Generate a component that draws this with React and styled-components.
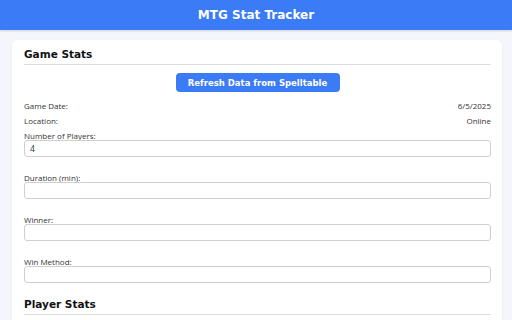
import React from "react";
import styled, { createGlobalStyle } from "styled-components";

const GlobalStyle = createGlobalStyle`
  html, body {
    margin: 0;
    padding: 0;
    background: #f4f6fb;
    font-family: "Open Sans", "Liberation Sans", sans-serif;
    color: #333;
  }
  * { box-sizing: border-box; }
`;

const boldFont = `"DejaVu Sans", "Liberation Sans", sans-serif`;

const Header = styled.header`
  height: 30px;
  background: #3b7bf6;
  color: #fff;
  display: flex;
  align-items: center;
  justify-content: center;
  font-family: ${boldFont};
  font-size: 12px;
  font-weight: 700;
  box-shadow: 0 1px 2px rgba(0, 0, 0, 0.15);
`;

const Main = styled.main`
  padding: 10px 10px 0 12px;
`;

const Card = styled.div`
  background: #fff;
  border-radius: 6px;
  padding: 7px 11px 12px 12px;
  box-shadow: 0 1px 3px rgba(0, 0, 0, 0.05);
  display: flex;
  flex-direction: column;
`;

const Section = styled.section`
  display: flex;
  flex-direction: column;
  & + & {
    margin-top: 14px;
  }
`;

const Heading = styled.h2`
  margin: 0;
  font-family: ${boldFont};
  font-size: 10.5px;
  line-height: 15px;
  font-weight: 700;
  color: #111;
  padding-bottom: 2px;
  border-bottom: 1px solid #dcdcdc;
`;

const ButtonRow = styled.div`
  display: flex;
  justify-content: center;
  margin: 8px 0 9px;
`;

const Button = styled.button`
  width: 164px;
  height: 19px;
  border: none;
  border-radius: 4px;
  background: #3b7bf6;
  color: #fff;
  font-family: ${boldFont};
  font-size: 8.5px;
  font-weight: 700;
  padding: 0;
  cursor: pointer;
`;

const InfoRow = styled.div`
  display: flex;
  justify-content: space-between;
  font-size: 8px;
  line-height: 9px;
  margin-bottom: 6px;
`;

const Fields = styled.div`
  display: flex;
  flex-direction: column;
  gap: 16px;
`;

const Field = styled.div`
  display: flex;
  flex-direction: column;
`;

const Label = styled.label`
  font-size: 8px;
  line-height: 9px;
`;

const Input = styled.input`
  height: 17px;
  border: 1px solid #cfcfcf;
  border-radius: 3px;
  padding: 0 5px;
  font-family: inherit;
  font-size: 8.5px;
  color: #333;
  outline: none;
`;

const fields = [
  { label: "Number of Players:", value: "4" },
  { label: "Duration (min):", value: "" },
  { label: "Winner:", value: "" },
  { label: "Win Method:", value: "" },
];

export default function App() {
  return (
    <>
      <GlobalStyle />
      <Header>MTG Stat Tracker</Header>
      <Main>
        <Card>
          <Section>
            <Heading>Game Stats</Heading>
            <ButtonRow>
              <Button>Refresh Data from Spelltable</Button>
            </ButtonRow>
            <InfoRow>
              <span>Game Date:</span>
              <span>6/5/2025</span>
            </InfoRow>
            <InfoRow>
              <span>Location:</span>
              <span>Online</span>
            </InfoRow>
            <Fields>
              {fields.map((f) => (
                <Field key={f.label}>
                  <Label>{f.label}</Label>
                  <Input defaultValue={f.value} />
                </Field>
              ))}
            </Fields>
          </Section>
          <Section>
            <Heading>Player Stats</Heading>
          </Section>
        </Card>
      </Main>
    </>
  );
}
